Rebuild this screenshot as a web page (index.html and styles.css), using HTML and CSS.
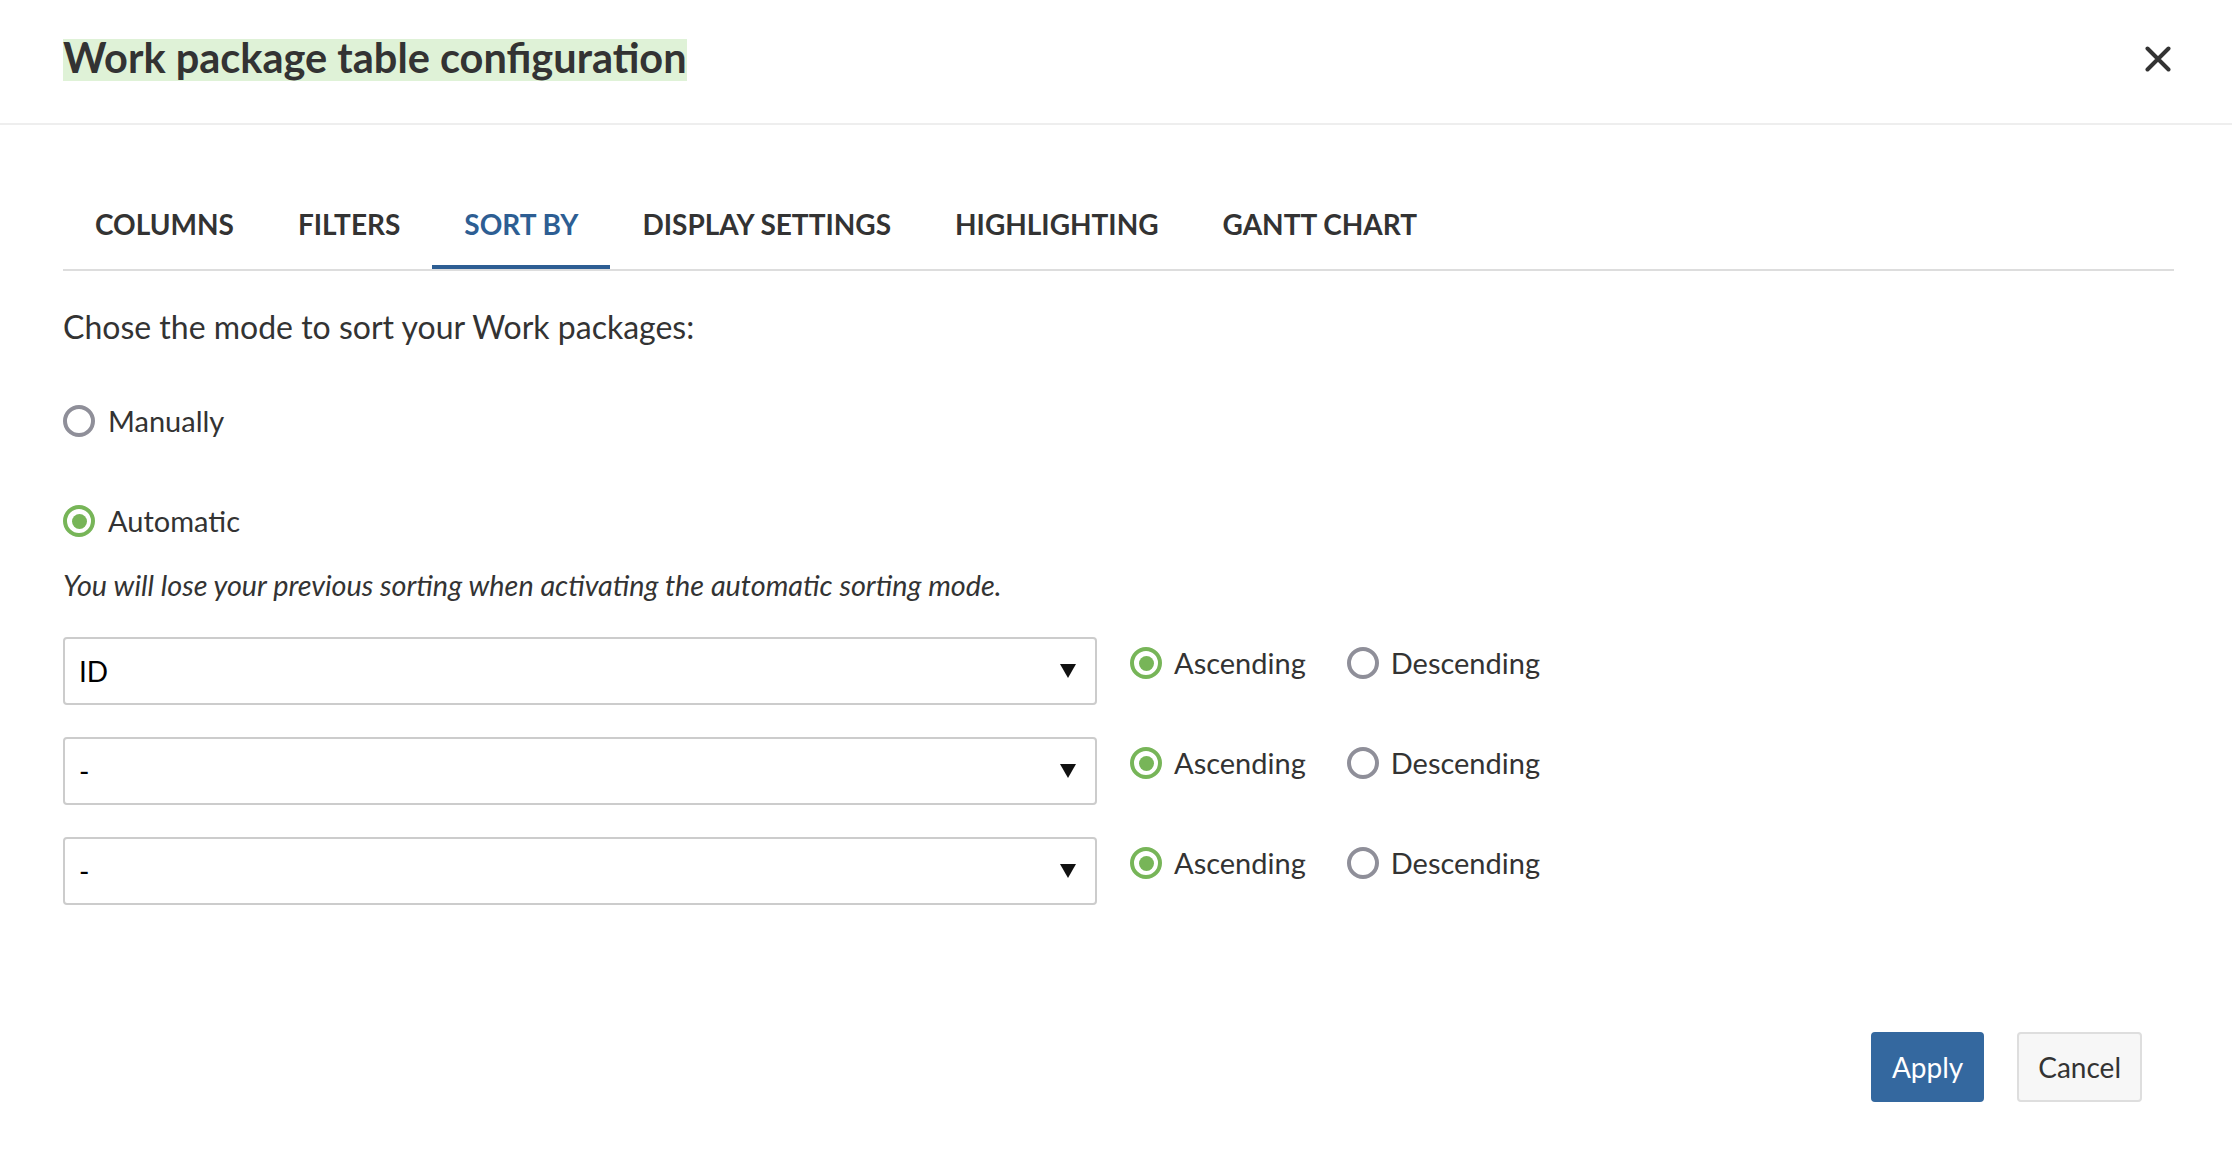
FILE: index.html
```html
<!DOCTYPE html>
<html lang="en">
<head>
<meta charset="utf-8">
<title>Work package table configuration</title>
<link rel="stylesheet" href="styles.css">
</head>
<body>
<div class="modal">
  <header class="modal-header">
    <h1 class="title"><span class="title-text">Work package table configuration</span></h1>
    <button class="close" aria-label="Close">
      <svg width="26" height="26" viewBox="0 0 26 26"><path d="M2.5 2.5 L23.5 23.5 M23.5 2.5 L2.5 23.5" stroke="#333" stroke-width="4" stroke-linecap="round" fill="none"/></svg>
    </button>
  </header>
  <div class="modal-body">
    <nav class="tabs">
      <a class="tab">COLUMNS</a>
      <a class="tab">FILTERS</a>
      <a class="tab active">SORT BY</a>
      <a class="tab">DISPLAY SETTINGS</a>
      <a class="tab">HIGHLIGHTING</a>
      <a class="tab">GANTT CHART</a>
    </nav>
    <p class="intro">Chose the mode to sort your Work packages:</p>
    <label class="radio-row mode manual"><span class="radio"></span><span class="label">Manually</span></label>
    <label class="radio-row mode auto"><span class="radio checked"></span><span class="label">Automatic</span></label>
    <p class="hint">You will lose your previous sorting when activating the automatic sorting mode.</p>
    <div class="sort-rows">
      <div class="sort-row">
        <div class="select"><span class="value">ID</span><span class="caret"></span></div>
        <div class="dir">
          <label class="radio-row"><span class="radio checked"></span><span class="label">Ascending</span></label>
          <label class="radio-row"><span class="radio"></span><span class="label">Descending</span></label>
        </div>
      </div>
      <div class="sort-row">
        <div class="select"><span class="value">-</span><span class="caret"></span></div>
        <div class="dir">
          <label class="radio-row"><span class="radio checked"></span><span class="label">Ascending</span></label>
          <label class="radio-row"><span class="radio"></span><span class="label">Descending</span></label>
        </div>
      </div>
      <div class="sort-row">
        <div class="select"><span class="value">-</span><span class="caret"></span></div>
        <div class="dir">
          <label class="radio-row"><span class="radio checked"></span><span class="label">Ascending</span></label>
          <label class="radio-row"><span class="radio"></span><span class="label">Descending</span></label>
        </div>
      </div>
    </div>
    <footer class="modal-footer">
      <button class="btn btn-primary">Apply</button>
      <button class="btn">Cancel</button>
    </footer>
  </div>
</div>
</body>
</html>
```

FILE: styles.css
```css
* { box-sizing: border-box; }
html, body { margin: 0; padding: 0; background: #fff; }
body {
  font-family: Lato, "Open Sans", "Liberation Sans", sans-serif;
  color: #333;
  font-size: 28px;
}
.modal { width: 2232px; }

.modal-header {
  display: flex;
  justify-content: space-between;
  align-items: flex-start;
  padding: 39px 61px 42px 63px;
  border-bottom: 2px solid #eeeeee;
}
.title {
  margin: 0;
  display: flex;
  font-size: 41.5px;
  font-weight: 700;
}
.title-text {
  display: block;
  background: #dff2d7;
  color: #333;
  line-height: 37px;
  padding-bottom: 5px;
}
.close {
  margin-top: 7px;
  width: 26px; height: 26px;
  padding: 0; border: 0; background: none;
  display: block;
}
.close svg { display: block; }

.modal-body { padding: 0 58px 0 63px; }

.tabs {
  display: flex;
  margin-top: 58px;
  border-bottom: 2px solid #dddddd;
}
.tab {
  display: block;
  padding: 24px 32px 24px;
  line-height: 34px;
  font-size: 28px;
  font-weight: 700;
  color: #333;
  border-bottom: 4px solid transparent;
}
.tab.active { color: #2d5e93; border-bottom-color: #2d5e93; }

.intro { margin: 39px 0 0; line-height: 34px; font-size: 32px; }

.radio-row {
  display: flex;
  align-items: center;
  height: 34px;
  line-height: 34px;
  font-size: 29px;
}
.radio-row .label { margin-left: 13px; }
.mode.manual { margin-top: 60px; }
.mode.auto { margin-top: 66px; }

.radio {
  width: 32px; height: 32px;
  border-radius: 50%;
  border: 4px solid #8f8f99;
  display: flex;
  align-items: center;
  justify-content: center;
  flex: none;
}
.radio.checked { border-color: #77b558; }
.radio.checked::after {
  content: "";
  width: 15px; height: 15px;
  border-radius: 50%;
  background: #77b558;
}

.hint { margin: 30px 0 0; font-style: italic; line-height: 34px; font-size: 28.8px; }

.sort-rows {
  margin-top: 35px;
  display: flex;
  flex-direction: column;
  gap: 32px;
}
.sort-row { display: flex; align-items: flex-start; }
.select {
  width: 1034px;
  height: 68px;
  border: 2px solid #cccccc;
  border-radius: 4px;
  display: flex;
  align-items: center;
  justify-content: space-between;
  padding: 0 19px 0 14px;
  color: #000;
}
.caret {
  width: 0; height: 0;
  border-left: 8px solid transparent;
  border-right: 8px solid transparent;
  border-top: 14px solid #111;
}
.dir {
  display: flex;
  margin-left: 33px;
  padding-top: 9px;
  gap: 41px;
}
.dir .label { margin-left: 12px; }

.modal-footer {
  display: flex;
  justify-content: flex-end;
  gap: 33px;
  margin-top: 127px;
  padding-right: 32px;
}
.btn {
  height: 70px;
  padding: 0 19px;
  font-family: inherit;
  font-size: 28px;
  color: #333;
  background: #f7f7f7;
  border: 2px solid #dedede;
  border-radius: 4px;
}
.btn-primary { background: #34689f; border-color: #34689f; color: #fff; }
```
